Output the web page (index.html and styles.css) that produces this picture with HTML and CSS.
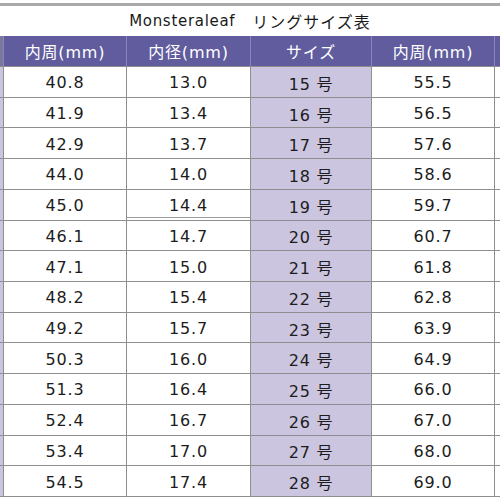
FILE: index.html
```html
<!DOCTYPE html>
<html lang="ja">
<head>
<meta charset="utf-8">
<title>Monsteraleaf リングサイズ表</title>
<link rel="stylesheet" href="styles.css">
</head>
<body>
<div class="page">
  <div class="topline"></div>
  <div class="title"><span class="brand">Monsteraleaf</span><span class="jp">　リングサイズ表</span></div>
  <div class="sheet">
    <div class="hc edge-l"></div><div class="hc">内周(mm)</div><div class="hc">内径(mm)</div><div class="hc">サイズ</div><div class="hc">内周(mm)</div><div class="hc"></div>

    <div class="c lav"></div><div class="c">40.8</div><div class="c">13.0</div><div class="c lav">15 号</div><div class="c">55.5</div><div class="c"></div>
    <div class="c lav"></div><div class="c">41.9</div><div class="c">13.4</div><div class="c lav">16 号</div><div class="c">56.5</div><div class="c"></div>
    <div class="c lav"></div><div class="c">42.9</div><div class="c">13.7</div><div class="c lav">17 号</div><div class="c">57.6</div><div class="c"></div>
    <div class="c lav"></div><div class="c">44.0</div><div class="c">14.0</div><div class="c lav">18 号</div><div class="c">58.6</div><div class="c"></div>
    <div class="c lav"></div><div class="c">45.0</div><div class="c dbl">14.4</div><div class="c lav">19 号</div><div class="c">59.7</div><div class="c"></div>
    <div class="c lav"></div><div class="c">46.1</div><div class="c">14.7</div><div class="c lav">20 号</div><div class="c">60.7</div><div class="c"></div>
    <div class="c lav"></div><div class="c">47.1</div><div class="c">15.0</div><div class="c lav">21 号</div><div class="c">61.8</div><div class="c"></div>
    <div class="c lav"></div><div class="c">48.2</div><div class="c">15.4</div><div class="c lav">22 号</div><div class="c">62.8</div><div class="c"></div>
    <div class="c lav"></div><div class="c">49.2</div><div class="c">15.7</div><div class="c lav">23 号</div><div class="c">63.9</div><div class="c"></div>
    <div class="c lav"></div><div class="c">50.3</div><div class="c">16.0</div><div class="c lav">24 号</div><div class="c">64.9</div><div class="c"></div>
    <div class="c lav"></div><div class="c">51.3</div><div class="c">16.4</div><div class="c lav">25 号</div><div class="c">66.0</div><div class="c"></div>
    <div class="c lav"></div><div class="c">52.4</div><div class="c">16.7</div><div class="c lav">26 号</div><div class="c">67.0</div><div class="c"></div>
    <div class="c lav"></div><div class="c">53.4</div><div class="c">17.0</div><div class="c lav">27 号</div><div class="c">68.0</div><div class="c"></div>
    <div class="c lav"></div><div class="c">54.5</div><div class="c">17.4</div><div class="c lav">28 号</div><div class="c">69.0</div><div class="c"></div>
  </div>
</div>
</body>
</html>
```
FILE: styles.css
```css
html, body {
  margin: 0;
  padding: 0;
  background: #ffffff;
}

.page {
  width: 500px;
  height: 500px;
  padding-top: 3px;
  box-sizing: border-box;
  overflow: hidden;
  font-family: "DejaVu Sans", "Noto Sans CJK JP", sans-serif;
  color: #1c1c1c;
}

.topline {
  height: 3px;
  background: #a9a9a9;
}

.title {
  height: 30px;
  display: flex;
  align-items: center;
  justify-content: center;
  font-size: 15px;
  letter-spacing: 0.7px;
  color: #1a1a1a;
}

.title .jp {
  font-family: "Noto Sans CJK JP", sans-serif;
  font-size: 16px;
  letter-spacing: 1px;
}

.sheet {
  display: grid;
  grid-template-columns: 3px 122px 123px 120px 122px 1fr;
  grid-template-rows: 30px repeat(14, 1fr);
  gap: 1px;
  height: 460px;
  background: #8e8e8e;
  border-bottom: 1px solid #8e8e8e;
}

.hc {
  background: #605c9e;
  color: #ffffff;
  display: flex;
  align-items: center;
  justify-content: center;
  font-size: 16px;
  letter-spacing: 0.8px;
  box-shadow: 1px 0 0 #8985b9;
}

.hc.edge-l {
  background: #7a7799;
}

.c {
  background: #ffffff;
  display: flex;
  align-items: center;
  justify-content: center;
  padding-top: 2px;
  box-sizing: border-box;
  font-size: 16px;
  letter-spacing: 0.8px;
}

.c.lav {
  background: #cbc5e0;
}

.c.dbl {
  box-shadow: inset 0 -2px 0 #ffffff, inset 0 -3px 0 #9a9a9a;
}
```
